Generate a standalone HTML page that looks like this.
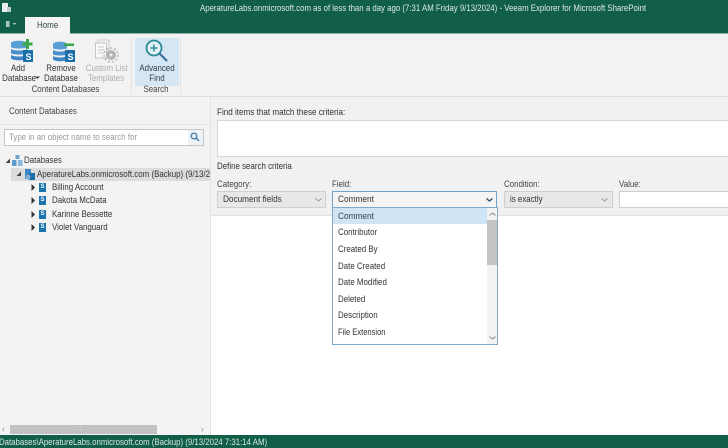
<!DOCTYPE html>
<html><head><meta charset="utf-8">
<style>
html,body{margin:0;padding:0}
body{width:728px;height:448px;overflow:hidden;position:relative;background:#fff;font-family:"Liberation Sans",sans-serif;font-size:9px;color:#333}
#w{position:absolute;left:0;top:0;width:728px;height:448px;overflow:hidden;filter:blur(.35px)}
.a{position:absolute;white-space:nowrap;transform:scaleX(.88);transform-origin:0 50%}
.b{position:absolute;box-sizing:border-box}
.c{text-align:center;line-height:9.500px;transform-origin:50% 50%}
svg{position:absolute;overflow:visible}
</style></head><body><div id="w">
<div class="b" style="left:0;top:0;width:728px;height:33px;background:#125f49"></div>
<div class="b" style="left:0;top:33px;width:728px;height:1px;background:#8fb5a8"></div>
<div class="a" style="left:200px;top:3px;color:#dbe9e4;line-height:11px;transform:scaleX(.87)">AperatureLabs.onmicrosoft.com as of less than a day ago (7:31 AM Friday 9/13/2024) - Veeam Explorer for Microsoft SharePoint</div>
<svg style="left:2px;top:3px" width="10" height="11"><rect x="0" y="0" width="6" height="9" fill="#e8efec"/><rect x="5" y="4" width="4" height="5" fill="#b9cfc7"/></svg>
<svg style="left:6px;top:20px" width="12" height="10"><rect x="0" y="1" width="3.500" height="6" fill="#a9c6bb"/><path d="M7 3h3l-1.500 2z" fill="#cfe0da"/></svg>
<div class="b" style="left:25px;top:17px;width:45px;height:18px;background:#f4f4f4"></div>
<div class="a" style="left:37px;top:20px;line-height:11px;color:#2f4a40">Home</div>

<div class="b" style="left:0;top:34px;width:728px;height:63px;background:#f2f2f2;border-bottom:1px solid #dedede"></div>
<div class="b" style="left:135px;top:38px;width:44px;height:48px;background:#d5e7f5"></div>
<div class="b" style="left:131px;top:38px;width:1px;height:56px;background:#e2e2e2"></div>
<div class="b" style="left:180px;top:38px;width:1px;height:56px;background:#e2e2e2"></div>

<svg style="left:10px;top:38px" width="24" height="25">
<path d="M1 5c0-3 16-3 16 0v4c0 2-16 2-16 0z" fill="#5a9ed6"/>
<path d="M1 11c3 2 13 2 16 0v4c0 2-16 2-16 0z" fill="#4a90cc"/>
<path d="M1 17c3 2 13 2 16 0v3c0 3-16 3-16 0z" fill="#3f86c4"/>
<rect x="13" y="12" width="10" height="12" fill="#1c6fa8"/><text x="15.500" y="22" font-size="9" font-weight="bold" fill="#fff" font-family="Liberation Sans">S</text>
<path d="M16 1h3v3.500h3.500v3H19V11h-3V7.500h-3.500v-3H16z" fill="#3aa84a"/>
</svg>
<svg style="left:52px;top:40px" width="24" height="24">
<path d="M1 4c0-3 14-3 14 0v4c0 2-14 2-14 0z" fill="#5a9ed6"/>
<path d="M1 10c3 2 11 2 14 0v4c0 2-14 2-14 0z" fill="#4a90cc"/>
<path d="M1 16c3 2 11 2 14 0v3c0 3-14 3-14 0z" fill="#3f86c4"/>
<rect x="13" y="10" width="10" height="12" fill="#1c6fa8"/><text x="15.500" y="20" font-size="9" font-weight="bold" fill="#fff" font-family="Liberation Sans">S</text>
<rect x="12" y="3.500" width="10" height="2.500" fill="#3aa84a"/>
</svg>
<svg style="left:95px;top:40px" width="24" height="24">
<rect x="3" y="0" width="11" height="14" fill="#f2f2f2" stroke="#c9c9c9"/><rect x="0.500" y="3" width="11" height="15" fill="#f8f8f8" stroke="#c4c4c4"/>
<path d="M3 7h6M3 10h6M3 13h6" stroke="#c9c9c9"/>
<circle cx="16" cy="15" r="5" fill="#b5b5b5"/><circle cx="16" cy="15" r="7" fill="none" stroke="#b5b5b5" stroke-width="1.500" stroke-dasharray="2 2"/><circle cx="16" cy="15" r="1.500" fill="#f2f2f2"/>
</svg>
<svg style="left:145px;top:39px" width="24" height="24">
<circle cx="9" cy="9" r="7.500" fill="#e4f1f6" stroke="#2f8a98" stroke-width="1.800"/>
<path d="M5.500 9h7M9 5.500v7" stroke="#2f8a98" stroke-width="1.500"/>
<path d="M14.500 14.500L22 22" stroke="#3a6f9a" stroke-width="2.200"/>
</svg>

<div class="a c" style="left:0;top:64px;width:36px">Add<br>Database</div>
<svg style="left:35px;top:76px" width="6" height="4"><path d="M0 0.500h5l-2.500 2.500z" fill="#444"/></svg>
<div class="a c" style="left:41px;top:64px;width:40px">Remove<br>Database</div>
<div class="a c" style="left:83px;top:64px;width:46px;color:#aeaeae">Custom List<br>Templates</div>
<div class="a c" style="left:135px;top:64px;width:44px;color:#33414d">Advanced<br>Find</div>
<div class="a c" style="left:0;top:85px;width:131px;color:#444">Content Databases</div>
<div class="a c" style="left:132px;top:85px;width:48px;color:#444">Search</div>

<div class="b" style="left:0;top:97px;width:211px;height:338px;background:#f3f3f3;border-right:1px solid #e2e2e2"></div>
<div class="a" style="left:9px;top:106px;line-height:11px;color:#444">Content Databases</div>
<div class="b" style="left:0;top:124px;width:210px;height:1px;background:#e6e6e6"></div>
<div class="b" style="left:4px;top:129px;width:200px;height:17px;background:#fff;border:1px solid #c6c6c6"></div>
<div class="b" style="left:188px;top:130px;width:15px;height:15px;background:#edf2f6"></div>
<div class="a" style="left:9px;top:132px;line-height:11px;color:#9a9a9a">Type in an object name to search for</div>
<svg style="left:190px;top:132px" width="10" height="10"><circle cx="4" cy="4" r="2.800" fill="none" stroke="#4a7fa8" stroke-width="1.300"/><path d="M6 6l3 3" stroke="#4a7fa8" stroke-width="1.500"/></svg>

<svg style="left:5px;top:158px" width="6" height="6"><path d="M5 0.500v4.500h-4.500z" fill="#444"/></svg>
<svg style="left:12px;top:155px" width="11" height="12"><rect x="3.500" y="0" width="4" height="4" fill="#6aa5d4"/><rect x="0" y="5" width="4.500" height="6" fill="#5c9ad0"/><rect x="6" y="5" width="4.500" height="6" fill="#8ab9de"/></svg>
<div class="a" style="left:24px;top:155px;line-height:11px">Databases</div>
<div class="b" style="left:11px;top:168px;width:199px;height:13px;background:#dcdcdc"></div>
<svg style="left:16px;top:171px" width="6" height="6"><path d="M5 0.500v4.500h-4.500z" fill="#444"/></svg>
<svg style="left:24px;top:168px" width="12" height="13"><rect x="1" y="1" width="6" height="10" fill="#3f86c4"/><rect x="5" y="5" width="6" height="7" fill="#1c6fa8"/><circle cx="4" cy="9" r="2.500" fill="#7fb0d8"/></svg>
<div class="a" style="left:37px;top:169px;width:197px;overflow:hidden;line-height:11px">AperatureLabs.onmicrosoft.com (Backup) (9/13/2024 7:31:14 AM)</div>

<svg style="left:31px;top:184px" width="5" height="7"><path d="M0.500 0l3.500 3.500-3.500 3.500z" fill="#333"/></svg>
<div class="b" style="left:39px;top:183px;width:7px;height:9px;background:#1c73ae;color:#fff;font-size:6px;font-weight:bold;line-height:9px;text-align:center">S</div>
<div class="a" style="left:52px;top:182px;line-height:11px">Billing Account</div>
<svg style="left:31px;top:197px" width="5" height="7"><path d="M0.500 0l3.500 3.500-3.500 3.500z" fill="#333"/></svg>
<div class="b" style="left:39px;top:196px;width:7px;height:9px;background:#1c73ae;color:#fff;font-size:6px;font-weight:bold;line-height:9px;text-align:center">S</div>
<div class="a" style="left:52px;top:195px;line-height:11px">Dakota McData</div>
<svg style="left:31px;top:211px" width="5" height="7"><path d="M0.500 0l3.500 3.500-3.500 3.500z" fill="#333"/></svg>
<div class="b" style="left:39px;top:210px;width:7px;height:9px;background:#1c73ae;color:#fff;font-size:6px;font-weight:bold;line-height:9px;text-align:center">S</div>
<div class="a" style="left:52px;top:209px;line-height:11px">Karinne Bessette</div>
<svg style="left:31px;top:224px" width="5" height="7"><path d="M0.500 0l3.500 3.500-3.500 3.500z" fill="#333"/></svg>
<div class="b" style="left:39px;top:223px;width:7px;height:9px;background:#1c73ae;color:#fff;font-size:6px;font-weight:bold;line-height:9px;text-align:center">S</div>
<div class="a" style="left:52px;top:222px;line-height:11px">Violet Vanguard</div>

<div class="b" style="left:10px;top:425px;width:147px;height:9px;background:#c2c2c2"></div>
<div class="a" style="left:2px;top:424px;line-height:10px;color:#888">‹</div>
<div class="a" style="left:201px;top:424px;line-height:10px;color:#888">›</div>
<div class="a" style="left:78px;top:425px;font-size:6px;line-height:9px;color:#ededed">:::</div>

<div class="b" style="left:211px;top:97px;width:517px;height:119px;background:#f1f1f1;border-bottom:1px solid #e2e2e2"></div>
<div class="a" style="left:217px;top:107px;line-height:11px;transform:scaleX(.9)">Find items that match these criteria:</div>
<div class="b" style="left:217px;top:120px;width:511px;height:37px;background:#fff;border:1px solid #d6d6d6;border-right:0"></div>
<div class="a" style="left:217px;top:161px;line-height:11px">Define search criteria</div>
<div class="a" style="left:217px;top:179px;line-height:11px;color:#444">Category:</div>
<div class="a" style="left:332px;top:179px;line-height:11px;color:#444">Field:</div>
<div class="a" style="left:504px;top:179px;line-height:11px;color:#444">Condition:</div>
<div class="a" style="left:619px;top:179px;line-height:11px;color:#444">Value:</div>

<div class="b" style="left:217px;top:191px;width:109px;height:17px;background:#e8e8e8;border:1px solid #cfcfcf"></div>
<div class="a" style="left:223px;top:194px;line-height:11px;transform:scaleX(.91)">Document fields</div>
<svg style="left:315px;top:198px" width="7" height="4"><path d="M0.500 0.500l3 2.500 3-2.500" fill="none" stroke="#999"/></svg>
<div class="b" style="left:332px;top:191px;width:165px;height:17px;background:#f4f4f4;border:1px solid #6fa3c8"></div>
<div class="a" style="left:338px;top:194px;line-height:11px;transform:scaleX(.92)">Comment</div>
<svg style="left:486px;top:198px" width="7" height="4"><path d="M0.500 0.500l3 2.500 3-2.500" fill="none" stroke="#2d4f68" stroke-width="1.300"/></svg>
<div class="b" style="left:504px;top:191px;width:109px;height:17px;background:#e8e8e8;border:1px solid #cfcfcf"></div>
<div class="a" style="left:510px;top:194px;line-height:11px">is exactly</div>
<svg style="left:601px;top:198px" width="7" height="4"><path d="M0.500 0.500l3 2.500 3-2.500" fill="none" stroke="#999"/></svg>
<div class="b" style="left:619px;top:191px;width:109px;height:17px;background:#fff;border:1px solid #cfcfcf;border-right:0"></div>

<div class="b" style="left:332px;top:207px;width:166px;height:138px;background:#fff;border:1px solid #7ea9c8"></div>
<div class="b" style="left:333px;top:208px;width:154px;height:16px;background:#cfe5f6"></div>
<div class="b" style="left:487px;top:208px;width:10px;height:136px;background:#f3f3f3"></div>
<div class="b" style="left:487px;top:220px;width:10px;height:45px;background:#c4c4c4"></div>
<svg style="left:489px;top:212px" width="7" height="4"><path d="M0.500 3.500l3-2.500 3 2.500" fill="none" stroke="#888"/></svg>
<svg style="left:489px;top:336px" width="7" height="4"><path d="M0.500 0.500l3 2.500 3-2.500" fill="none" stroke="#888"/></svg>
<div class="a" style="left:338px;top:211px;line-height:11px;color:#38424a;transform:scaleX(.92)">Comment</div>
<div class="a" style="left:338px;top:227px;line-height:11px">Contributor</div>
<div class="a" style="left:338px;top:244px;line-height:11px">Created By</div>
<div class="a" style="left:338px;top:261px;line-height:11px">Date Created</div>
<div class="a" style="left:338px;top:277px;line-height:11px">Date Modified</div>
<div class="a" style="left:338px;top:294px;line-height:11px">Deleted</div>
<div class="a" style="left:338px;top:310px;line-height:11px">Description</div>
<div class="a" style="left:338px;top:327px;line-height:11px;transform:scaleX(.84)">File Extension</div>

<div class="b" style="left:0;top:435px;width:728px;height:13px;background:#125f49"></div>
<div class="a" style="left:-1px;top:437px;line-height:11px;color:#d5e5df;transform:scaleX(.87)">Databases\AperatureLabs.onmicrosoft.com (Backup) (9/13/2024 7:31:14 AM)</div>
</div></body></html>
